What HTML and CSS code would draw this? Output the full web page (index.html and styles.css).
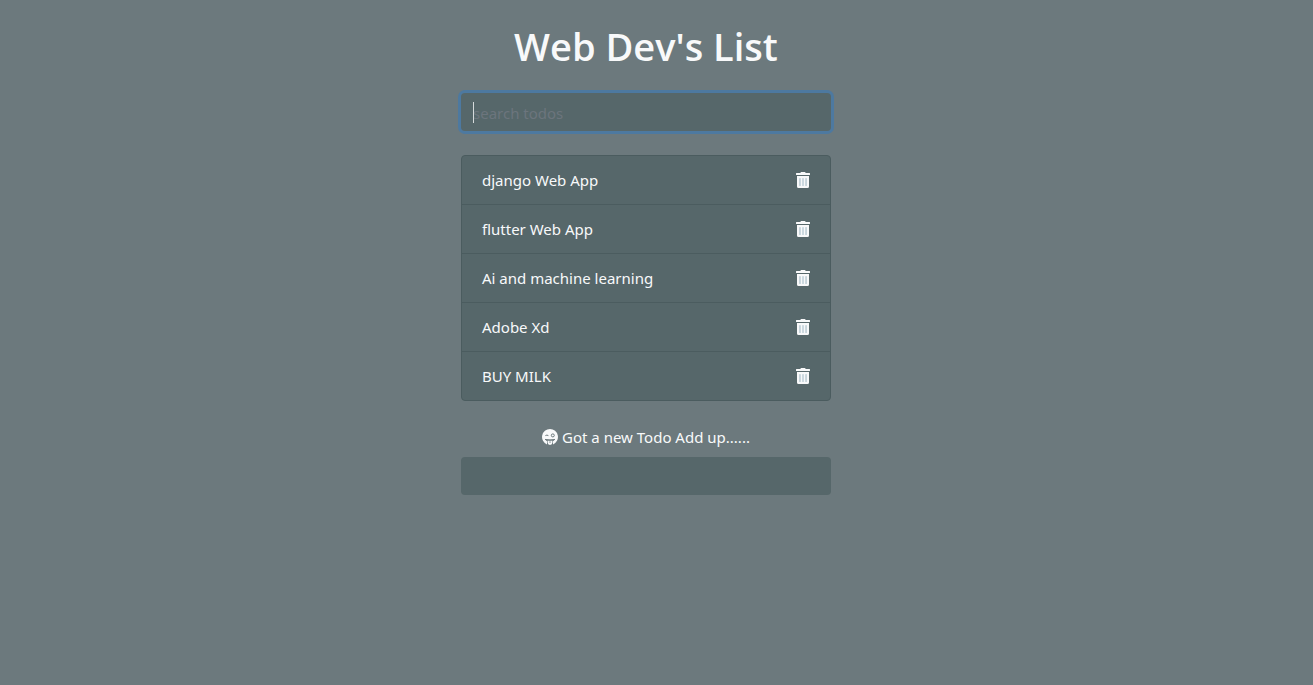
FILE: index.html
```html
<!DOCTYPE html>
<html lang="en">
<head>
<meta charset="utf-8">
<meta name="viewport" content="width=device-width, initial-scale=1">
<title>Web Dev's List</title>
<link rel="stylesheet" href="styles.css">
</head>
<body>
<svg class="sprite" aria-hidden="true">
  <symbol id="trash" viewBox="0 0 448 512">
    <path class="trash-slots" d="M100 190h248v260H100z"/>
    <path d="M32 464a48 48 0 0 0 48 48h288a48 48 0 0 0 48-48V128H32zm272-256a16 16 0 0 1 32 0v224a16 16 0 0 1-32 0zm-96 0a16 16 0 0 1 32 0v224a16 16 0 0 1-32 0zm-96 0a16 16 0 0 1 32 0v224a16 16 0 0 1-32 0zM432 32H312l-9.4-18.7A24 24 0 0 0 281.1 0H166.8a23.72 23.72 0 0 0-21.4 13.3L136 32H16A16 16 0 0 0 0 48v32a16 16 0 0 0 16 16h416a16 16 0 0 0 16-16V48a16 16 0 0 0-16-16z"/>
  </symbol>
</svg>
<main class="container">
  <header class="header">
    <h1 class="title">Web Dev's List</h1>
    <form class="search">
      <input class="field" type="text" name="search" placeholder="search todos" aria-label="search todos" autocomplete="off" autofocus>
      <span class="caret" aria-hidden="true"></span>
    </form>
  </header>
  <ul class="todos">
    <li class="todo"><span>django Web App</span><button class="delete" type="button" aria-label="Delete django Web App"><svg class="trash"><use href="#trash"/></svg></button></li>
    <li class="todo"><span>flutter Web App</span><button class="delete" type="button" aria-label="Delete flutter Web App"><svg class="trash"><use href="#trash"/></svg></button></li>
    <li class="todo"><span>Ai and machine learning</span><button class="delete" type="button" aria-label="Delete Ai and machine learning"><svg class="trash"><use href="#trash"/></svg></button></li>
    <li class="todo"><span>Adobe Xd</span><button class="delete" type="button" aria-label="Delete Adobe Xd"><svg class="trash"><use href="#trash"/></svg></button></li>
    <li class="todo"><span>BUY MILK</span><button class="delete" type="button" aria-label="Delete BUY MILK"><svg class="trash"><use href="#trash"/></svg></button></li>
  </ul>
  <form class="add">
    <label class="add-label" for="add">
      <svg class="face" viewBox="0 0 16 16" aria-hidden="true">
        <path class="face-fill" d="M8 0a8 8 0 0 0-3 15.4V12.2L3 10.4h10L11 12.2v3.2A8 8 0 0 0 8 0z"/>
        <path class="face-fill" d="M5.6 11.4h4.8v2.2a2.4 2.4 0 0 1-4.8 0z"/>
        <path class="face-line" d="M3.4 6.6Q4.9 5.6 6.4 6.6M3 10.4Q8 12 13 10.4M8 12.4v1.4"/>
        <circle class="face-line" cx="10.8" cy="6.4" r="1.5"/>
      </svg>
      Got a new Todo Add up......
    </label>
    <input class="field" id="add" type="text" name="add" autocomplete="off">
  </form>
</main>
</body>
</html>
```

FILE: styles.css
```css
*,
*::before,
*::after {
  box-sizing: border-box;
}

:root {
  --page: #6c797d;
  --panel: #56676a;
  --line: #4b5c5f;
  --light: #f8f9fa;
}

body {
  margin: 0;
  padding-right: 21px;
  background: var(--page);
  color: var(--light);
  font-family: "Segoe UI", "Noto Sans", "Open Sans", sans-serif;
  font-size: 15px;
  line-height: 24px;
}

.sprite {
  position: absolute;
  width: 0;
  height: 0;
}

.container {
  max-width: 400px;
  margin: 0 auto;
  padding: 22px 15px;
}

.header {
  margin-bottom: 24px;
  text-align: center;
}

.title {
  margin: 0 0 23px;
  font-family: "Segoe UI", "Open Sans", sans-serif;
  font-size: 38px;
  font-weight: 600;
  line-height: 48px;
}

.search {
  position: relative;
}

.field {
  display: block;
  width: 100%;
  height: 38px;
  padding: 7px 12px 5px;
  border: 0;
  border-radius: 4px;
  background: var(--panel);
  color: #fff;
  font: inherit;
}

.search .field {
  caret-color: transparent;
}

.caret {
  position: absolute;
  top: 9px;
  left: 12px;
  width: 1px;
  height: 21px;
  background: #d5dadb;
}

.field::placeholder {
  color: #6c757d;
  opacity: 1;
}

.field:focus {
  outline: 0;
  box-shadow: 0 0 0 3px #4d79a0;
}

.todos {
  margin: 0 0 24px;
  padding: 0;
  border: 1px solid var(--line);
  border-radius: 4px;
  background: var(--panel);
  list-style: none;
}

.todo {
  display: flex;
  align-items: center;
  justify-content: space-between;
  padding: 12px 20px;
}

.todo + .todo {
  border-top: 1px solid var(--line);
}

.delete {
  display: flex;
  padding: 0;
  border: 0;
  background: none;
  color: inherit;
  cursor: pointer;
}

.trash {
  width: 14px;
  height: 16px;
  fill: currentColor;
}

.trash-slots {
  fill: #9fb9c6;
}

.add-label {
  display: flex;
  align-items: center;
  justify-content: center;
  gap: 4px;
  margin-bottom: 8px;
}

.face {
  width: 16px;
  height: 16px;
}

.face-fill {
  fill: currentColor;
}

.face-line {
  fill: none;
  stroke: var(--page);
  stroke-width: 1;
}
```
